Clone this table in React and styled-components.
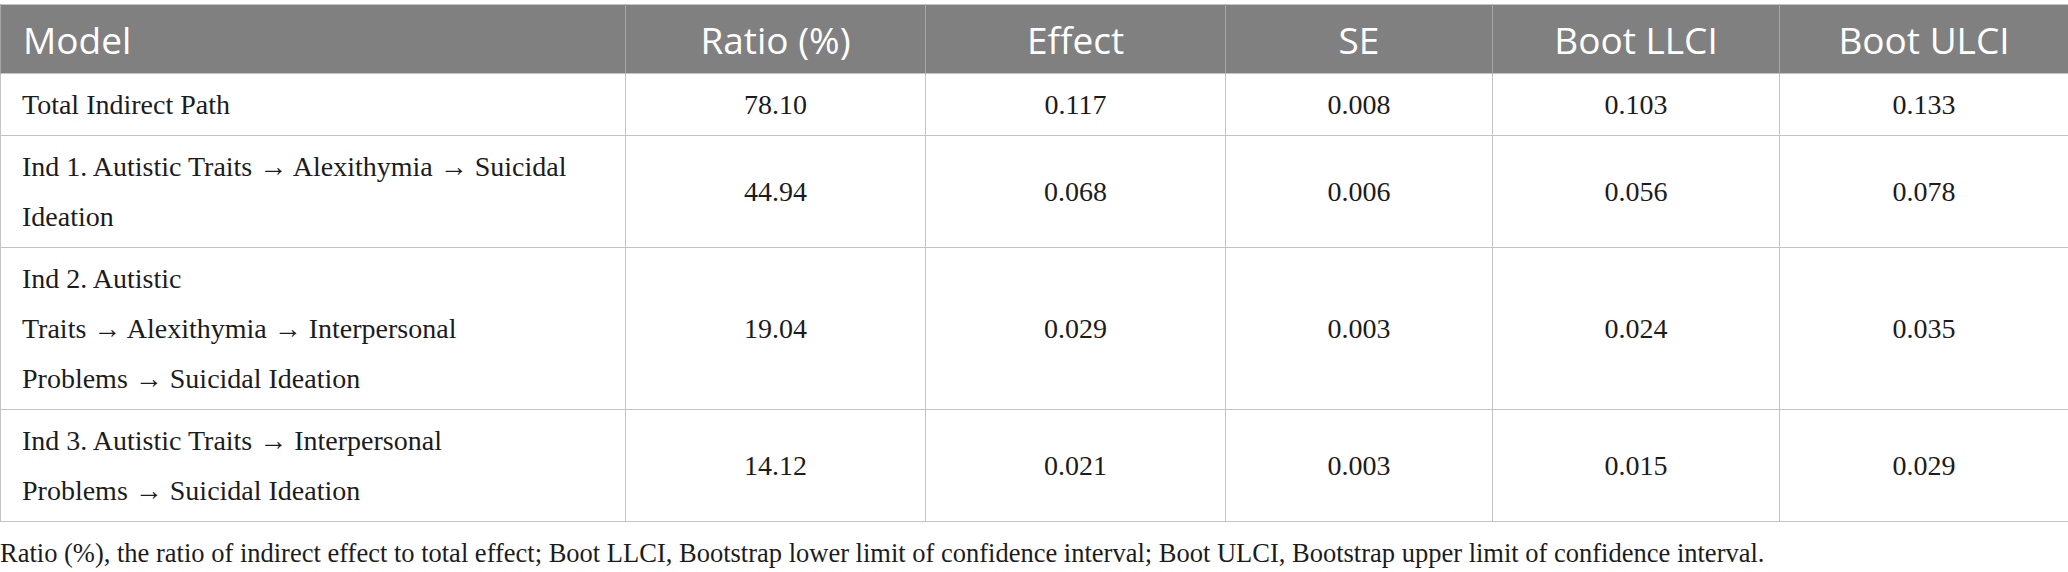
import React from "react";
import styled, { createGlobalStyle } from "styled-components";

const GlobalStyle = createGlobalStyle`
  html, body {
    margin: 0;
    padding: 0;
    background: #ffffff;
  }
`;

const Page = styled.div`
  width: 2068px;
  padding-top: 4px;
`;

const Table = styled.table`
  width: 2068px;
  border-collapse: collapse;
  table-layout: fixed;
  border: 1px solid #c4c4c4;
`;

const HeadCell = styled.th`
  background: #808080;
  color: #ffffff;
  font-family: "Open Sans", "Liberation Sans", sans-serif;
  font-weight: 400;
  font-size: 37px;
  height: 68px;
  padding: 0 22px;
  text-align: ${(p) => (p.$left ? "left" : "center")};
  border-left: 1px solid #a6a6a6;
  border-right: 1px solid #a6a6a6;
`;

const Cell = styled.td`
  font-family: "Liberation Serif", "Times New Roman", serif;
  font-size: 28px;
  line-height: 50px;
  color: #1c1c1c;
  padding: 6px 21px 5px;
  text-align: ${(p) => (p.$left ? "left" : "center")};
  vertical-align: middle;
  border: 1px solid #c4c4c4;
`;

const Line = styled.span`
  display: block;
  white-space: nowrap;
`;

const Footnote = styled.p`
  margin: 16px 0 0;
  font-family: "Liberation Serif", "Times New Roman", serif;
  font-size: 26.5px;
  color: #1c1c1c;
`;

const columns = [
  { label: "Model", width: 625, left: true },
  { label: "Ratio (%)", width: 300 },
  { label: "Effect", width: 300 },
  { label: "SE", width: 267 },
  { label: "Boot LLCI", width: 287 },
  { label: "Boot ULCI", width: 289 },
];

const rows = [
  {
    model: ["Total Indirect Path"],
    values: ["78.10", "0.117", "0.008", "0.103", "0.133"],
  },
  {
    model: ["Ind 1. Autistic Traits \u2192 Alexithymia \u2192 Suicidal", "Ideation"],
    values: ["44.94", "0.068", "0.006", "0.056", "0.078"],
  },
  {
    model: [
      "Ind 2. Autistic",
      "Traits \u2192 Alexithymia \u2192 Interpersonal",
      "Problems \u2192 Suicidal Ideation",
    ],
    values: ["19.04", "0.029", "0.003", "0.024", "0.035"],
  },
  {
    model: ["Ind 3. Autistic Traits \u2192 Interpersonal", "Problems \u2192 Suicidal Ideation"],
    values: ["14.12", "0.021", "0.003", "0.015", "0.029"],
  },
];

const App = () => {
  return (
    <>
      <GlobalStyle />
      <Page>
        <Table>
          <colgroup>
            {columns.map((col) => (
              <col key={col.label} style={{ width: col.width }} />
            ))}
          </colgroup>
          <thead>
            <tr>
              {columns.map((col) => (
                <HeadCell key={col.label} $left={col.left}>
                  {col.label}
                </HeadCell>
              ))}
            </tr>
          </thead>
          <tbody>
            {rows.map((row, i) => (
              <tr key={i}>
                <Cell $left>
                  {row.model.map((line) => (
                    <Line key={line}>{line}</Line>
                  ))}
                </Cell>
                {row.values.map((value, j) => (
                  <Cell key={j}>{value}</Cell>
                ))}
              </tr>
            ))}
          </tbody>
        </Table>
        <Footnote>
          Ratio (%), the ratio of indirect effect to total effect; Boot LLCI,
          Bootstrap lower limit of confidence interval; Boot ULCI, Bootstrap
          upper limit of confidence interval.
        </Footnote>
      </Page>
    </>
  );
};

export default App;
